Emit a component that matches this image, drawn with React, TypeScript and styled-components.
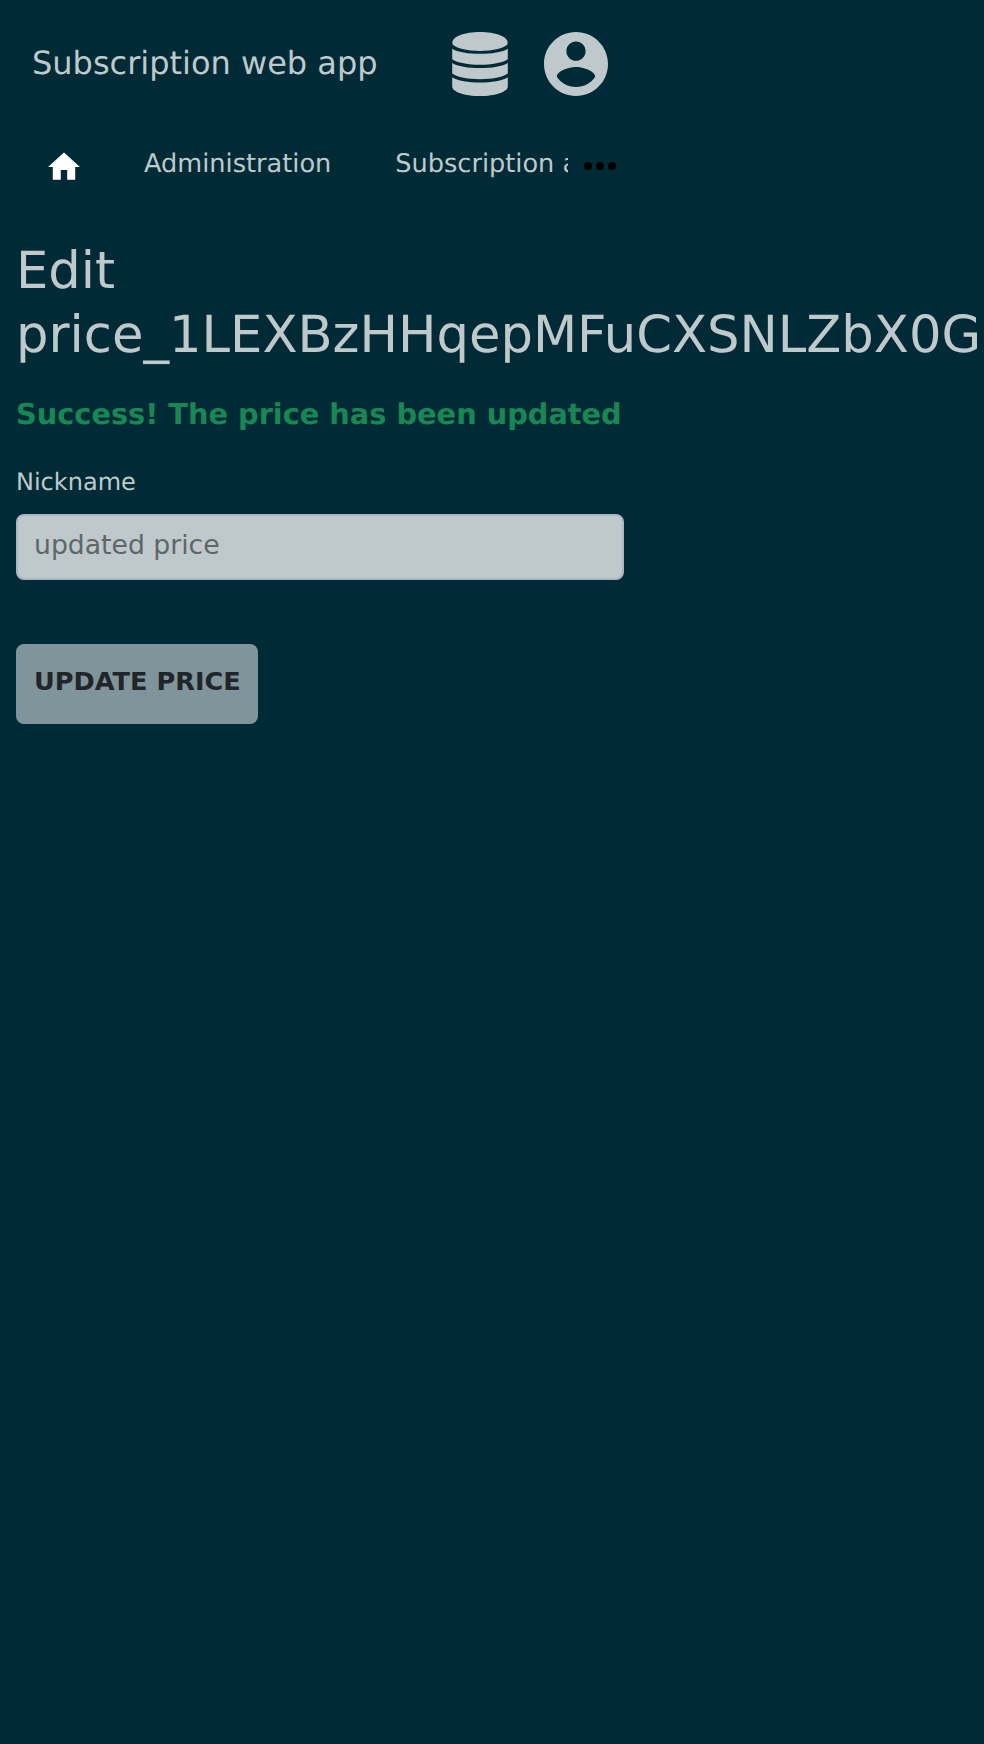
import React from "react";
import styled, { createGlobalStyle } from "styled-components";

const ink = "#bfc9cb";

const GlobalStyle = createGlobalStyle`
  *, *::before, *::after { box-sizing: border-box; }
  html { background: #002b36; overflow: hidden; }
  body {
    margin: 0;
    background: #002b36;
    color: ${ink};
    font-family: "DejaVu Sans", sans-serif;
    text-rendering: geometricPrecision;
  }
`;

const Page = styled.div`
  width: 640px;
  min-height: 1744px;
  display: flex;
  flex-direction: column;
`;

const Header = styled.header`
  height: 128px;
  padding: 0 32px;
  display: flex;
  align-items: center;
  justify-content: space-between;
`;

const AppTitle = styled.div`
  font-size: 32px;
  line-height: 48px;
  white-space: nowrap;
  margin-top: -2px;
`;

const HeaderIcons = styled.div`
  display: flex;
  gap: 32px;
`;

const Icon = styled.svg<{ $w: number; $h: number; $color?: string }>`
  display: block;
  flex: none;
  width: ${(p) => p.$w}px;
  height: ${(p) => p.$h}px;
  fill: ${(p) => p.$color ?? ink};
`;

const Nav = styled.nav`
  height: 72px;
  padding: 0 24px 0 48px;
  display: flex;
`;

const NavItems = styled.div`
  flex: none;
  width: 520px;
  overflow: hidden;
  display: flex;
  gap: 64px;
`;

const HomeLink = styled.a`
  padding-top: 24px;
`;

const NavLink = styled.a`
  font-size: 25.6px;
  line-height: 40px;
  padding-top: 16px;
  white-space: nowrap;
`;

const MoreButton = styled.div`
  padding: 34px 0 0 16px;
`;

const Main = styled.main`
  padding: 39px 16px 0;
  display: flex;
  flex-direction: column;
  align-items: flex-start;
`;

const Heading = styled.h1`
  margin: 0;
  font-size: 51.2px;
  line-height: 64px;
  font-weight: 400;
`;

const Success = styled.div`
  margin-top: 25px;
  font-size: 28.8px;
  line-height: 44px;
  font-weight: 700;
  color: #198754;
  white-space: nowrap;
`;

const Form = styled.form`
  width: 100%;
  margin-top: 28px;
  display: flex;
  flex-direction: column;
  align-items: flex-start;
`;

const Label = styled.label`
  font-size: 24px;
  line-height: 36px;
`;

const Input = styled.input`
  width: 100%;
  height: 66px;
  margin: 14px 0 64px;
  padding: 0 16px 5px;
  border: 2px solid #a9b5c3;
  border-radius: 8px;
  background: ${ink};
  color: #5e6768;
  font: 400 26.667px "DejaVu Sans", sans-serif;
  outline: none;
`;

const SubmitButton = styled.button`
  height: 80px;
  padding: 0 17.5px 6px 18px;
  width: 242px;
  border: 0;
  border-radius: 8px;
  background: #80959b;
  color: #212529;
  font: 700 25.6px "DejaVu Sans", sans-serif;
  text-transform: uppercase;
  white-space: nowrap;
`;

const DatabaseIcon = () => (
  <Icon $w={64} $h={64} viewBox="-4 0 64 64">
    <path d="M28 0C43 0 55.6 4.6 55.6 10.2V12C53 16 41 19 28 19S3 16 .4 12V10.2C.4 4.6 13 0 28 0z" />
    <path d="M.2 16.7C10 23.5 46 23.5 55.8 16.7V27.3C46 34.6 10 34.6 .2 27.3z" />
    <path d="M.2 31C10 37.8 46 37.8 55.8 31V41.6C46 49.2 10 49.2 .2 41.6z" />
    <path d="M.2 45.2C10 52.2 46 52.2 55.8 45.2V54.4C55.8 59.8 43 64 28 64S.2 59.8 .2 54.4z" />
  </Icon>
);

const AccountIcon = () => (
  <Icon $w={64} $h={64} viewBox="2 2 20 20">
    <path d="M12 2C6.48 2 2 6.48 2 12s4.48 10 10 10 10-4.48 10-10S17.52 2 12 2zm0 3c1.66 0 3 1.34 3 3s-1.34 3-3 3-3-1.34-3-3 1.34-3 3-3zm0 14.2c-2.5 0-4.71-1.28-6-3.22.03-1.99 4-3.08 6-3.08 1.99 0 5.97 1.09 6 3.08-1.29 1.94-3.5 3.22-6 3.22z" />
  </Icon>
);

const HomeIcon = () => (
  <Icon $w={32} $h={28} $color="#fff" viewBox="2 2.7 20 17.5">
    <path d="M10 20v-6h4v6h5v-8h3L12 3 2 12h3v8z" />
  </Icon>
);

const MoreIcon = () => (
  <Icon $w={32} $h={8} $color="#000" viewBox="0 0 32 8">
    <circle cx="4" cy="4" r="4" />
    <circle cx="16" cy="4" r="4" />
    <circle cx="28" cy="4" r="4" />
  </Icon>
);

export default function App() {
  return (
    <>
      <GlobalStyle />
      <Page>
        <Header>
          <AppTitle>Subscription web app</AppTitle>
          <HeaderIcons>
            <DatabaseIcon />
            <AccountIcon />
          </HeaderIcons>
        </Header>
        <Nav>
          <NavItems>
            <HomeLink>
              <HomeIcon />
            </HomeLink>
            <NavLink>Administration</NavLink>
            <NavLink>Subscription administration</NavLink>
          </NavItems>
          <MoreButton>
            <MoreIcon />
          </MoreButton>
        </Nav>
        <Main>
          <Heading>Edit price_1LEXBzHHqepMFuCXSNLZbX0G</Heading>
          <Success>Success! The price has been updated</Success>
          <Form>
            <Label htmlFor="nickname">Nickname</Label>
            <Input id="nickname" defaultValue="updated price" />
            <SubmitButton type="button">Update price</SubmitButton>
          </Form>
        </Main>
      </Page>
    </>
  );
}
